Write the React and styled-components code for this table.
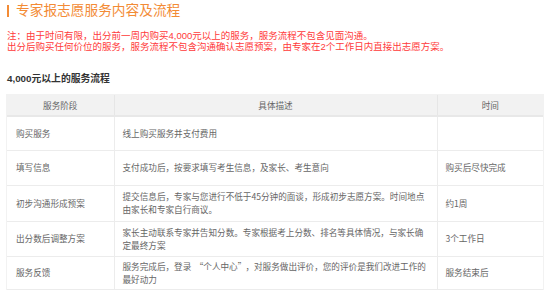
import styled, { createGlobalStyle } from 'styled-components';

const GlobalStyle = createGlobalStyle`
  body {
    margin: 0;
    background: #fff;
    font-family: "Liberation Sans", "Noto Sans CJK SC", sans-serif;
  }
`;

const Page = styled.div`
  padding: 3px 7px 0 7px;
  width: 536px;
`;

const Title = styled.h2`
  display: flex;
  align-items: center;
  gap: 7px;
  margin: 0;
  height: 16px;
  font-size: 13.7px;
  font-weight: normal;
  color: #f38b35;
  line-height: 16px;

  &::before {
    content: '';
    width: 2px;
    height: 12px;
    background: #f38b35;
  }
`;

const Note = styled.p`
  margin: 11px 0 0;
  font-size: 9.5px;
  line-height: 11px;
  color: #ff3a3a;
`;

const SubTitle = styled.h3`
  margin: 21px 0 0;
  font-size: 9.8px;
  line-height: 12px;
  font-weight: bold;
  color: #333;
`;

const Table = styled.table`
  margin-top: 10px;
  width: 536px;
  border-collapse: collapse;
  table-layout: fixed;
  font-family: "Noto Sans CJK SC", "Liberation Sans", sans-serif;
  font-size: 8.6px;
  color: #666;
  box-shadow: 0 0 0 1px #f2f2f2;
`;

const HeadCell = styled.th`
  height: 20px;
  padding: 0;
  background: #f2f2f2;
  font-weight: normal;
  text-align: center;
  border-right: 1px solid #e6e6e6;
  border-bottom: 2px solid #e8e8e8;

  &:last-child {
    border-right: none;
  }
`;

const Cell = styled.td`
  height: ${({ $h }) => $h}px;
  padding: 0 ${({ $first }) => ($first ? '9px' : '8px')};
  box-sizing: border-box;
  line-height: 13px;
  vertical-align: middle;
  border-right: 1px solid #ececec;
  border-bottom: 1px solid #ececec;

  &:last-child {
    border-right: none;
  }
`;

/* quoted phrase set with full-width spacing round the quote marks */
const Quoted = styled.span`
  padding: 0 0.4em;
`;

const rows = [
  { stage: '购买服务', desc: '线上购买服务并支付费用', time: '', h: 34 },
  {
    stage: '填写信息',
    desc: '支付成功后，按要求填写考生信息，及家长、考生意向',
    time: '购买后尽快完成',
    h: 35,
  },
  {
    stage: '初步沟通形成预案',
    desc: '提交信息后，专家与您进行不低于45分钟的面谈，形成初步志愿方案。时间地点由家长和专家自行商议。',
    time: '约1周',
    h: 36,
  },
  {
    stage: '出分数后调整方案',
    desc: '家长主动联系专家并告知分数。专家根据考上分数、排名等具体情况，与家长确定最终方案',
    time: '3个工作日',
    h: 35,
  },
  {
    stage: '服务反馈',
    desc: (
      <>
        服务完成后，登录<Quoted>“个人中心”</Quoted>，对服务做出评价，您的评价是我们改进工作的最好动力
      </>
    ),
    time: '服务结束后',
    h: 33,
  },
];

export default function App() {
  return (
    <Page>
      <GlobalStyle />
      <Title>专家报志愿服务内容及流程</Title>
      <Note>
        注：由于时间有限，出分前一周内购买4,000元以上的服务，服务流程不包含见面沟通。
        <br />
        出分后购买任何价位的服务，服务流程不包含沟通确认志愿预案，由专家在2个工作日内直接出志愿方案。
      </Note>
      <SubTitle>4,000元以上的服务流程</SubTitle>
      <Table>
        <colgroup>
          <col style={{ width: 107 }} />
          <col style={{ width: 323 }} />
          <col style={{ width: 106 }} />
        </colgroup>
        <thead>
          <tr>
            <HeadCell>服务阶段</HeadCell>
            <HeadCell>具体描述</HeadCell>
            <HeadCell>时间</HeadCell>
          </tr>
        </thead>
        <tbody>
          {rows.map((r) => (
            <tr key={r.stage}>
              <Cell $h={r.h} $first>
                {r.stage}
              </Cell>
              <Cell $h={r.h}>{r.desc}</Cell>
              <Cell $h={r.h}>{r.time}</Cell>
            </tr>
          ))}
        </tbody>
      </Table>
    </Page>
  );
}
